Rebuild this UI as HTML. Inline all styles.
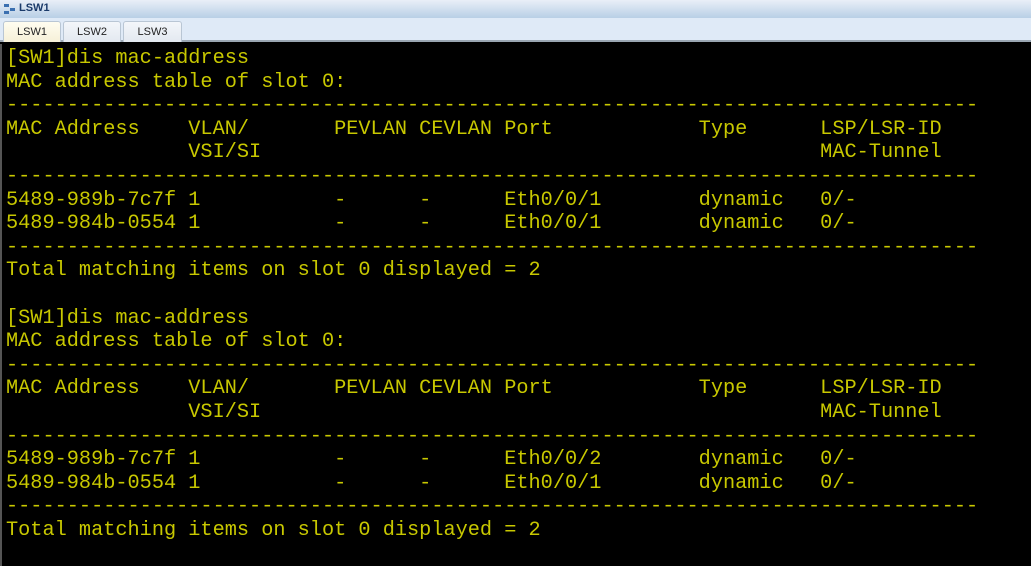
<!DOCTYPE html>
<html><head><meta charset="utf-8"><style>
html,body{margin:0;padding:0;width:1031px;height:566px;overflow:hidden;background:#000;font-family:"Liberation Sans",sans-serif}
#title{position:absolute;left:0;top:0;width:1031px;height:18px;background:linear-gradient(#e9eff8,#b8cfe6);}
#title span{position:absolute;left:19px;top:2px;font-size:11px;color:#1a3a6a;font-weight:bold}
#tabs{position:absolute;left:0;top:18px;width:1031px;height:24px;background:#dfeaf7;border-bottom:2px solid #9aa6b2;box-sizing:border-box}
.tab{position:absolute;top:3px;height:21px;border:1px solid #b9c6d4;border-bottom:none;border-radius:3px 3px 0 0;background:linear-gradient(#f3f6fa,#e3e9f0);font-size:11px;color:#222;text-align:center;line-height:20px;box-sizing:border-box}
#con{position:absolute;left:0;top:44px;width:1031px;height:522px;background:#000;border-left:2px solid #555;box-sizing:border-box}
pre{margin:0;position:absolute;left:4px;top:3px;font-family:"Liberation Mono",monospace;font-size:20.25px;line-height:23.6px;color:#c8c800}
</style></head><body>
<div id="title"><svg style="position:absolute;left:3px;top:3px" width="13" height="12"><rect x="1" y="1" width="5" height="3" fill="#3a6fb0"/><rect x="7" y="5" width="5" height="3" fill="#3a6fb0"/><rect x="1" y="8" width="5" height="3" fill="#3a6fb0"/></svg><span>LSW1</span></div>
<div id="tabs">
<div class="tab" style="left:3px;width:58px;background:linear-gradient(#fffdf0,#f6f0d8)">LSW1</div>
<div class="tab" style="left:63px;width:58px">LSW2</div>
<div class="tab" style="left:123px;width:59px">LSW3</div>
</div>
<div id="con"><pre>[SW1]dis mac-address
MAC address table of slot 0:
--------------------------------------------------------------------------------
MAC Address    VLAN/       PEVLAN CEVLAN Port            Type      LSP/LSR-ID
               VSI/SI                                              MAC-Tunnel
--------------------------------------------------------------------------------
5489-989b-7c7f 1           -      -      Eth0/0/1        dynamic   0/-
5489-984b-0554 1           -      -      Eth0/0/1        dynamic   0/-
--------------------------------------------------------------------------------
Total matching items on slot 0 displayed = 2

[SW1]dis mac-address
MAC address table of slot 0:
--------------------------------------------------------------------------------
MAC Address    VLAN/       PEVLAN CEVLAN Port            Type      LSP/LSR-ID
               VSI/SI                                              MAC-Tunnel
--------------------------------------------------------------------------------
5489-989b-7c7f 1           -      -      Eth0/0/2        dynamic   0/-
5489-984b-0554 1           -      -      Eth0/0/1        dynamic   0/-
--------------------------------------------------------------------------------
Total matching items on slot 0 displayed = 2
</pre></div>
</body></html>
